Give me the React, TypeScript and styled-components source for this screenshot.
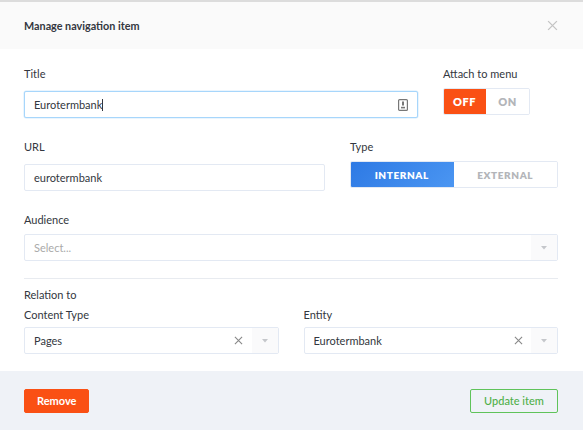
import React from "react";
import styled, { createGlobalStyle } from "styled-components";

const Global = createGlobalStyle`
  html, body { margin: 0; padding: 0; background: #fff; }
  body { font-family: Lato, "Open Sans", sans-serif; color: #333740; }
  * { box-sizing: border-box; }
`;

const Modal = styled.div`
  width: 583px;
  height: 430px;
  display: flex;
  flex-direction: column;
  border-top: 2px solid #dcdcdc;
  background: #fff;
`;

const Header = styled.div`
  height: 47px;
  background: #fafafa;
  display: flex;
  align-items: center;
  justify-content: space-between;
  padding: 0 24px;
`;

const HeaderTitle = styled.h1`
  margin: 0;
  font-size: 10.8px;
  font-weight: 700;
  color: #333740;
`;

const Close = styled.button`
  border: 0;
  background: none;
  padding: 0;
  width: 12px;
  height: 12px;
  display: flex;
  cursor: pointer;
`;

const Body = styled.div`
  flex: 1;
  padding: 17px 25px 0 24px;
  display: flex;
  flex-direction: column;
`;

const Row = styled.div<{ $cols: string; $gap: number; $mb: number }>`
  display: grid;
  grid-template-columns: ${(p) => p.$cols};
  column-gap: ${(p) => p.$gap}px;
  margin-bottom: ${(p) => p.$mb}px;
`;

const Field = styled.div`
  display: flex;
  flex-direction: column;
`;

const Label = styled.label<{ $mb?: number }>`
  font-size: 11px;
  line-height: 16px;
  color: #333740;
  margin-bottom: ${(p) => p.$mb ?? 9}px;
`;

const Input = styled.div<{ $focus?: boolean }>`
  height: 27px;
  border: 1px solid ${(p) => (p.$focus ? "#a7d6fb" : "#e3e9f3")};
  border-radius: 2px;
  display: flex;
  align-items: center;
  padding: 0 9px 0 9px;
  font-size: 11px;
  color: #333740;
  background: #fff;
  box-shadow: ${(p) => (p.$focus ? "0 0 0 0.5px #d6ecfd" : "none")};
`;

const InputText = styled.span`
  flex: 1;
`;

const Caret = styled.span`
  display: inline-block;
  width: 1px;
  height: 12px;
  background: #333740;
  vertical-align: -2px;
`;

const Toggle = styled.div<{ $w: number }>`
  width: ${(p) => p.$w}px;
  height: 27px;
  display: flex;
  border: 1px solid #e3e9f3;
  border-radius: 2px;
  overflow: hidden;
`;

const ToggleBtn = styled.div<{ $active?: boolean; $kind: "orange" | "blue"; $fs: number }>`
  flex: 1;
  display: flex;
  align-items: center;
  justify-content: center;
  font-size: ${(p) => p.$fs}px;
  font-weight: 800;
  letter-spacing: 0.6px;
  text-transform: uppercase;
  color: ${(p) => (p.$active ? "#fff" : "#b3b5b9")};
  background: ${(p) =>
    !p.$active
      ? "#fff"
      : p.$kind === "orange"
      ? "#fa5014"
      : "linear-gradient(315deg, #4b96f2 0%, #2d79e4 100%)"};
  margin: ${(p) => (p.$active ? "-1px 0 -1px -1px" : "0")};
`;

const Select = styled.div`
  height: 27px;
  border: 1px solid #e3e9f3;
  border-radius: 2px;
  display: flex;
  align-items: stretch;
  font-size: 11px;
  background: #fff;
`;

const SelectValue = styled.div<{ $placeholder?: boolean }>`
  flex: 1;
  display: flex;
  align-items: center;
  padding-left: 9px;
  color: ${(p) => (p.$placeholder ? "#aaa" : "#333740")};
`;

const Clear = styled.div`
  width: 26px;
  display: flex;
  align-items: center;
  justify-content: center;
`;

const Arrow = styled.div`
  width: 26px;
  background: #fafafb;
  display: flex;
  align-items: center;
  justify-content: center;
`;

const Divider = styled.hr`
  border: 0;
  height: 1px;
  background: #e8ebf0;
  margin: 0 0 8px 0;
`;

const Footer = styled.div`
  height: 59px;
  background: #eff2f7;
  display: flex;
  align-items: center;
  justify-content: space-between;
  padding: 0 25px 0 24px;
`;

const Button = styled.button<{ $variant: "danger" | "success" }>`
  height: 24px;
  border-radius: 2px;
  font-family: Lato, sans-serif;
  font-size: 11px;
  cursor: pointer;
  padding: 0 12px;
  ${(p) =>
    p.$variant === "danger"
      ? `background: #fa5014; color: #fff; border: 1px solid #fa5014; font-weight: 700; min-width: 64px;`
      : `background: transparent; color: #4fb04a; border: 1px solid #5fc35a; font-weight: 500; min-width: 88px;`}
`;

const XIcon = ({ size = 10, color = "#bbb" }: { size?: number; color?: string }) => (
  <svg width={size} height={size} viewBox="0 0 10 10">
    <path d="M1 1L9 9M9 1L1 9" stroke={color} strokeWidth="1.2" />
  </svg>
);

const ArrowIcon = () => (
  <svg width="6" height="4" viewBox="0 0 6 4">
    <path d="M0 0H6L3 3.5Z" fill="#c5c7cb" />
  </svg>
);

const InfoIcon = () => (
  <svg width="10" height="12" viewBox="0 0 10 12">
    <rect x="0.6" y="0.6" width="8.8" height="10.8" rx="1" fill="none" stroke="#777" strokeWidth="1.2" />
    <rect x="4" y="2.5" width="2" height="4" fill="#777" />
    <rect x="3" y="7.8" width="4" height="1.6" fill="#777" />
  </svg>
);

export default function App() {
  return (
    <>
      <Global />
      <Modal>
        <Header>
          <HeaderTitle>Manage navigation item</HeaderTitle>
          <Close aria-label="close">
            <XIcon size={11} color="#c4c4c4" />
          </Close>
        </Header>
        <Body>
          <Row $cols="394px 1fr" $gap={25} $mb={21}>
            <Field>
              <Label>Title</Label>
              <Input $focus>
                <InputText>
                  Eurotermbank<Caret />
                </InputText>
                <InfoIcon />
              </Input>
            </Field>
            <Field>
              <Label $mb={6}>Attach to menu</Label>
              <Toggle $w={87}>
                <ToggleBtn $active $kind="orange" $fs={11}>Off</ToggleBtn>
                <ToggleBtn $kind="orange" $fs={11}>On</ToggleBtn>
              </Toggle>
            </Field>
          </Row>
          <Row $cols="301px 1fr" $gap={25} $mb={21}>
            <Field>
              <Label>URL</Label>
              <Input>
                <InputText>eurotermbank</InputText>
              </Input>
            </Field>
            <Field>
              <Label $mb={6}>Type</Label>
              <Toggle $w={208}>
                <ToggleBtn $active $kind="blue" $fs={10}>Internal</ToggleBtn>
                <ToggleBtn $kind="blue" $fs={10}>External</ToggleBtn>
              </Toggle>
            </Field>
          </Row>
          <Row $cols="1fr" $gap={0} $mb={17}>
            <Field>
              <Label $mb={6}>Audience</Label>
              <Select>
                <SelectValue $placeholder>Select...</SelectValue>
                <Arrow>
                  <ArrowIcon />
                </Arrow>
              </Select>
            </Field>
          </Row>
          <Divider />
          <Label $mb={4}>Relation to</Label>
          <Row $cols="1fr 1fr" $gap={25} $mb={0}>
            <Field>
              <Label $mb={4}>Content Type</Label>
              <Select>
                <SelectValue>Pages</SelectValue>
                <Clear>
                  <XIcon size={9} color="#888" />
                </Clear>
                <Arrow>
                  <ArrowIcon />
                </Arrow>
              </Select>
            </Field>
            <Field>
              <Label $mb={4}>Entity</Label>
              <Select>
                <SelectValue>Eurotermbank</SelectValue>
                <Clear>
                  <XIcon size={9} color="#888" />
                </Clear>
                <Arrow>
                  <ArrowIcon />
                </Arrow>
              </Select>
            </Field>
          </Row>
        </Body>
        <Footer>
          <Button $variant="danger">Remove</Button>
          <Button $variant="success">Update item</Button>
        </Footer>
      </Modal>
    </>
  );
}
